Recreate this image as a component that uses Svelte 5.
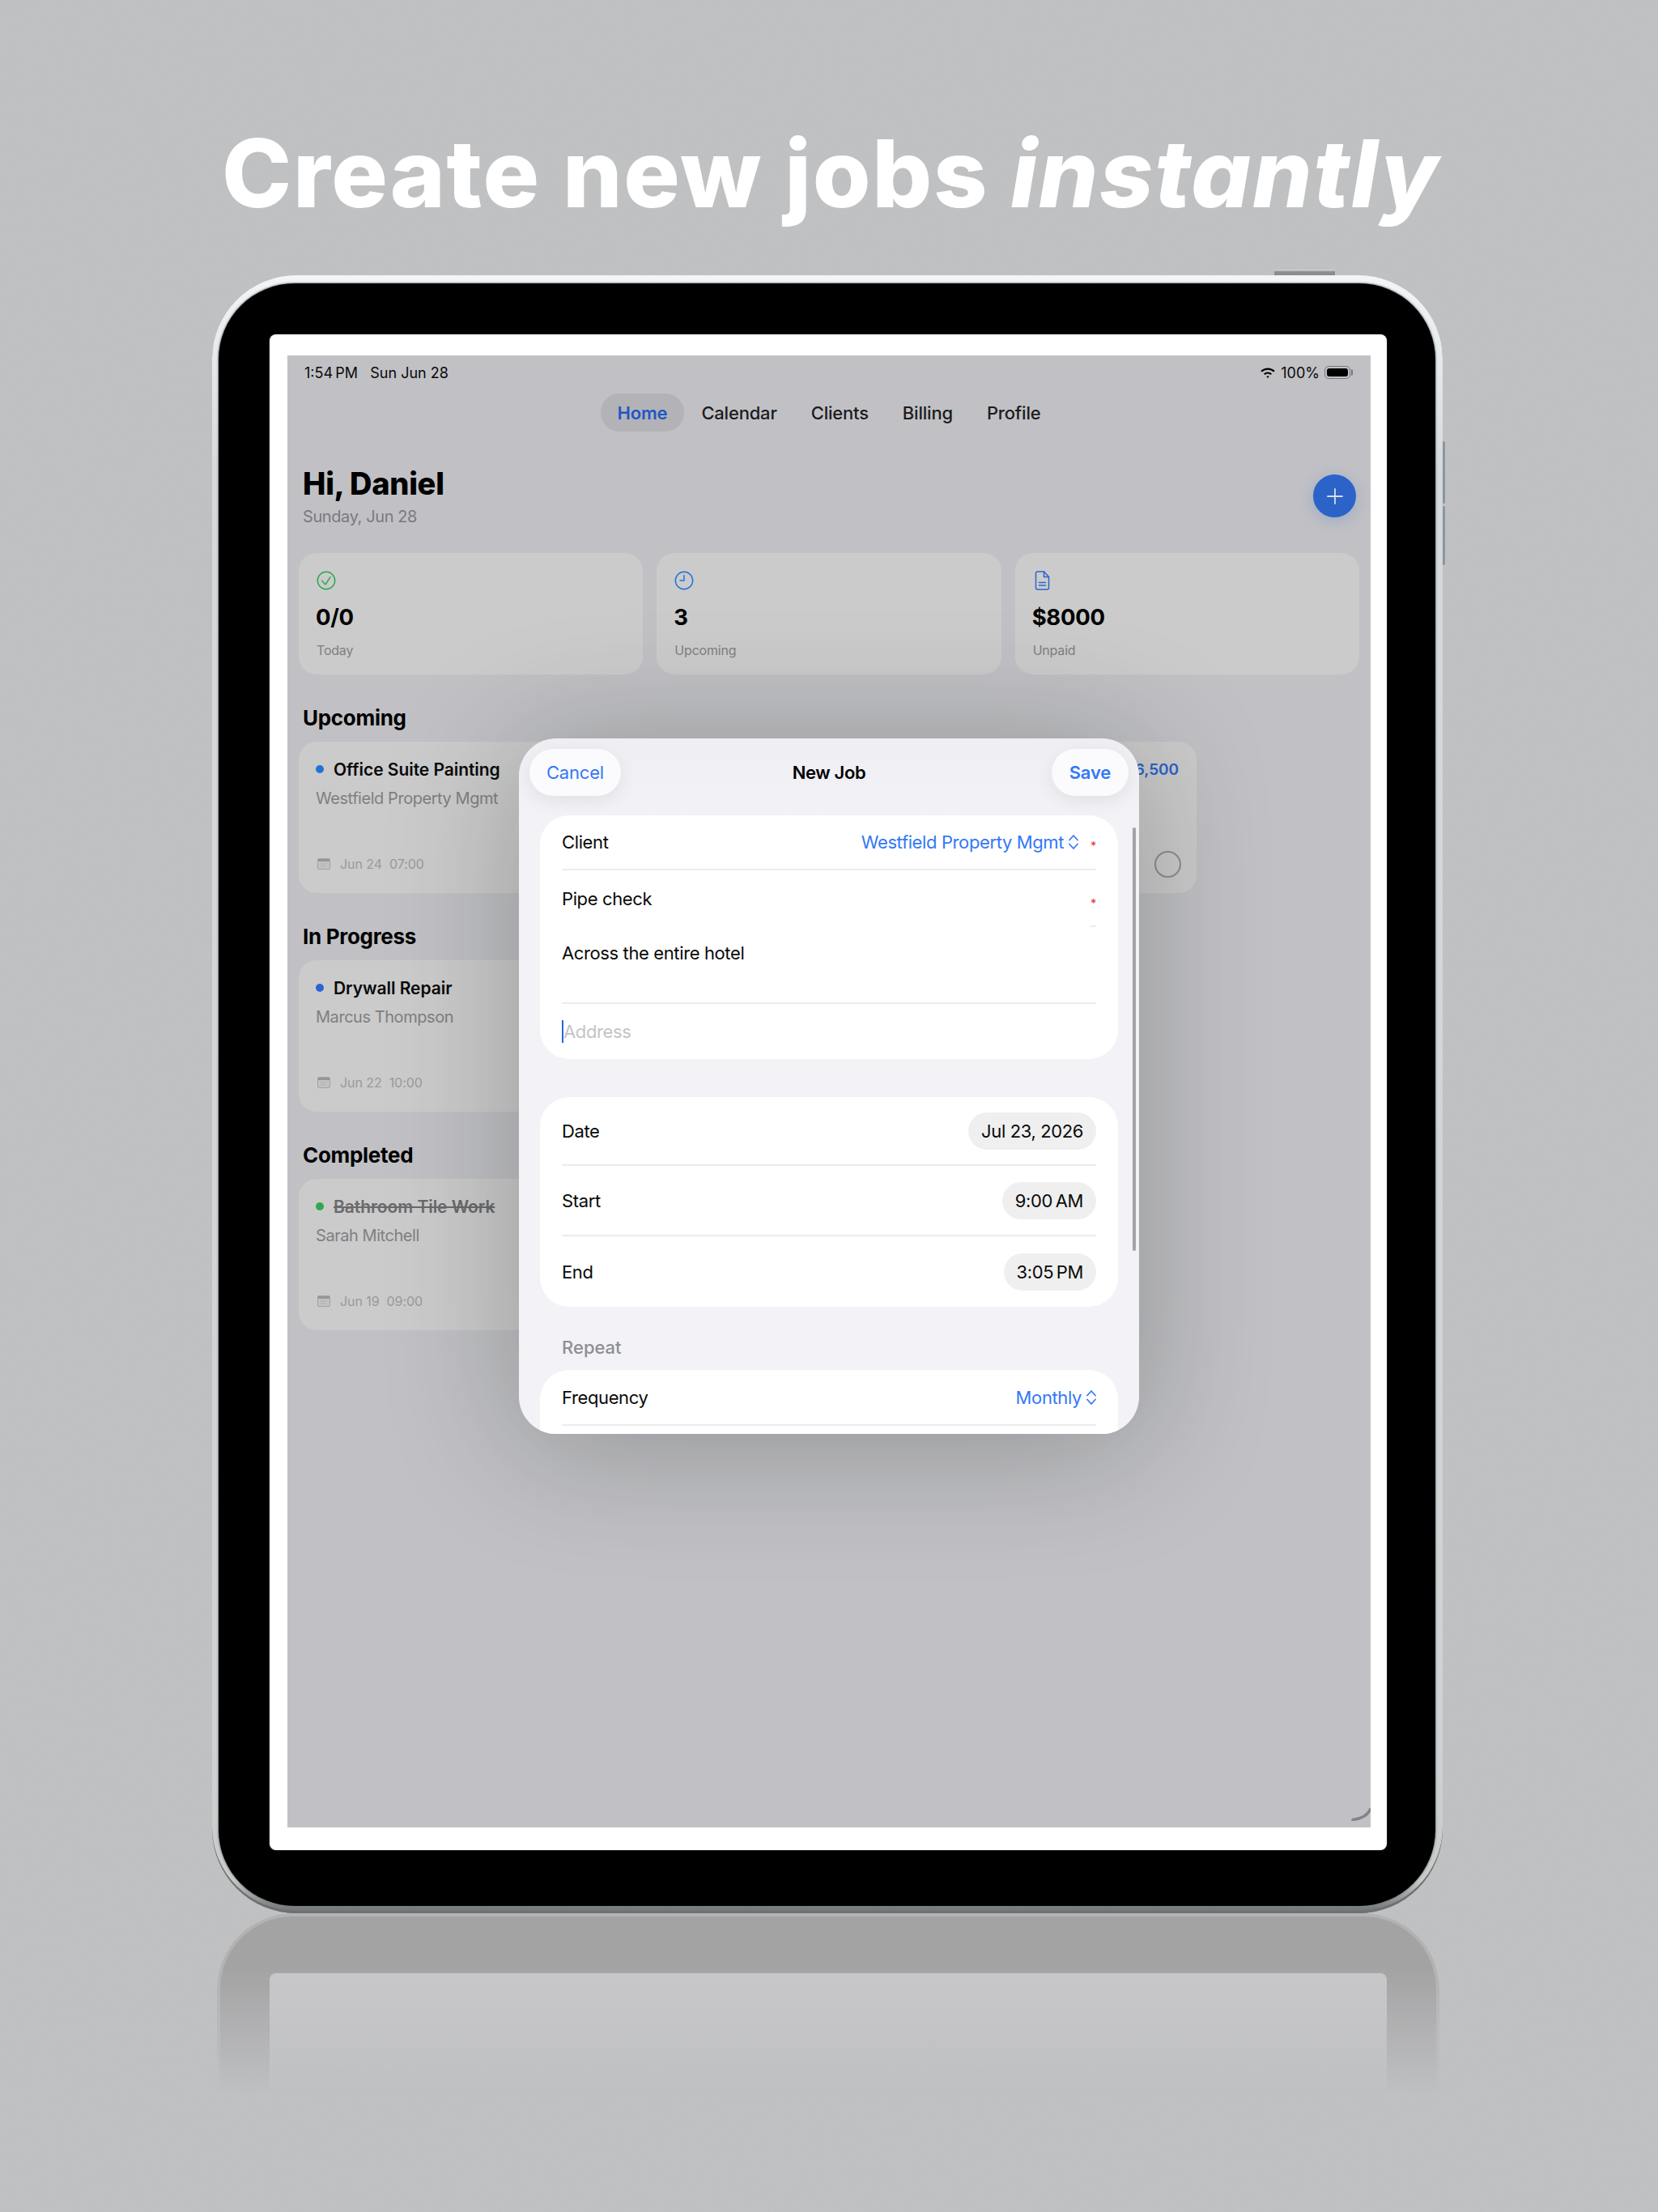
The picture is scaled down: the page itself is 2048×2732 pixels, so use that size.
<script lang="ts">
    const stats = [
        { id: "check", value: "0/0", label: "Today" },
        { id: "clock", value: "3", label: "Upcoming" },
        { id: "doc", value: "$8000", label: "Unpaid" },
    ];
    const tabs = ["Home", "Calendar", "Clients", "Billing", "Profile"];
    const sections = [
        { title: "In Progress", job: "Drywall Repair", client: "Marcus Thompson", date: "Jun 22", time: "10:00", dot: "#2c64d4", done: false },
        { title: "Completed", job: "Bathroom Tile Work", client: "Sarah Mitchell", date: "Jun 19", time: "09:00", dot: "#2ea84f", done: true },
    ];
</script>

{#snippet calendar()}
    <svg class="cal" viewBox="0 0 16 14" width="16" height="14">
        <rect x="0.5" y="0.5" width="15" height="13" rx="1.5" fill="#c2c2c2" stroke="#a2a2a2" />
        <path d="M1 1h14v3H1z" fill="#969696" />
        <path d="M4 7h8M4 10h8" stroke="#a2a2a2" stroke-dasharray="1 1" fill="none" />
    </svg>
{/snippet}

{#snippet updown()}
    <svg viewBox="0 0 12 20" width="12" height="20" fill="none" stroke="#3478f6" stroke-width="1.7" stroke-linecap="round" stroke-linejoin="round">
        <path d="M1 7.5 6 2l5 5.500M1 12.500 6 18l5-5.500" />
    </svg>
{/snippet}

<div class="page">
    <svg class="grain" width="2048" height="2732" aria-hidden="true">
        <filter id="noise"><feTurbulence type="fractalNoise" baseFrequency="0.7" numOctaves="2" /><feColorMatrix type="saturate" values="0" /></filter>
        <rect width="2048" height="2732" filter="url(#noise)" />
    </svg>

    <h1 class="headline">Create new jobs <em>instantly</em></h1>

    <div class="device">
        <span class="btn-top"></span>
        <span class="btn-vol one"></span>
        <span class="btn-vol two"></span>
        <div class="bezel">
            <div class="white">
                <div class="screen">
                    <div class="status">
                        <span>1:54&#8239;PM&nbsp;&nbsp;&nbsp;Sun Jun 28</span>
                        <div class="status-right">
                            <svg viewBox="0 0 20 15" width="20" height="15" fill="#000">
                                <path d="M10 11.200a2 2 0 0 1 1.600.8L10 14l-1.600-2a2 2 0 0 1 1.600-.8Z" />
                                <path d="M10 6.400c2 0 3.800.8 5 2.100l-1.500 1.600A5 5 0 0 0 10 8.600a5 5 0 0 0-3.500 1.500L5 8.500a7 7 0 0 1 5-2.100Z" />
                                <path d="M10 1.500c3.400 0 6.500 1.300 8.700 3.500l-1.500 1.600A10 10 0 0 0 10 3.700a10 10 0 0 0-7.200 2.900L1.300 5A12.500 12.500 0 0 1 10 1.500Z" />
                            </svg>
                            <span>100%</span>
                            <div class="battery"><i></i></div>
                        </div>
                    </div>

                    <nav class="tabs">
                        {#each tabs as tab, i}
                            <span class="tab" class:active={i === 0}>{tab}</span>
                        {/each}
                    </nav>

                    <header class="hello">
                        <div>
                            <h2>Hi, Daniel</h2>
                            <p>Sunday, Jun 28</p>
                        </div>
                        <div class="fab">
                            <svg viewBox="0 0 20 20" width="20" height="20" stroke="#d8dde8" stroke-width="1.8" stroke-linecap="round">
                                <path d="M10 1v18M1 10h18" />
                            </svg>
                        </div>
                    </header>

                    <div class="stats">
                        {#each stats as s}
                            <div class="stat">
                                <div class="stat-icon">
                                    {#if s.id === "check"}
                                        <svg viewBox="0 0 24 24" width="24" height="24" fill="none" stroke="#2ea84f" stroke-width="1.5" stroke-linecap="round" stroke-linejoin="round">
                                            <circle cx="12" cy="12" r="10.7" />
                                            <path d="m6.700 12.300 4.300 4.700 6-9.300" />
                                        </svg>
                                    {:else if s.id === "clock"}
                                        <svg viewBox="0 0 24 24" width="24" height="24" fill="none" stroke="#1f74d6" stroke-width="1.5" stroke-linecap="round" stroke-linejoin="round">
                                            <circle cx="12" cy="12" r="10.7" />
                                            <path d="M12 5.500V12H7" />
                                        </svg>
                                    {:else}
                                        <svg viewBox="0 0 24 24" width="24" height="24" fill="none" stroke="#2c64d0" stroke-width="1.5" stroke-linecap="round" stroke-linejoin="round">
                                            <path d="M5.500 1h8l6 6.500V21a2 2 0 0 1-2 2H5.500a2 2 0 0 1-2-2V3a2 2 0 0 1 2-2Z" />
                                            <path d="M13.500 1v6.500h6M7.500 14.500h8M7.500 18h8" />
                                        </svg>
                                    {/if}
                                </div>
                                <div class="stat-value">{s.value}</div>
                                <div class="stat-label">{s.label}</div>
                            </div>
                        {/each}
                    </div>

                    <section>
                        <h3>Upcoming</h3>
                        <div class="cards">
                            <div class="card">
                                <div class="job"><i style="background:#1f74d6"></i>Office Suite Painting</div>
                                <div class="client">Westfield Property Mgmt</div>
                                <div class="when">{@render calendar()}<span>Jun 24&nbsp;&nbsp;07:00</span></div>
                            </div>
                            <div class="card">
                                <div class="job"><span class="price">$6,500</span></div>
                                <div class="when end"><span class="radio"></span></div>
                            </div>
                        </div>
                    </section>

                    {#each sections as sec}
                        <section>
                            <h3>{sec.title}</h3>
                            <div class="cards">
                                <div class="card">
                                    <div class="job" class:done={sec.done}><i style="background:{sec.dot}"></i><span>{sec.job}</span></div>
                                    <div class="client">{sec.client}</div>
                                    <div class="when">{@render calendar()}<span>{sec.date}&nbsp;&nbsp;{sec.time}</span></div>
                                </div>
                            </div>
                        </section>
                    {/each}

                    <div class="modal">
                        <div class="modal-head">
                            <span class="pill">Cancel</span>
                            <strong>New Job</strong>
                            <span class="pill save">Save</span>
                        </div>

                        <div class="group first">
                            <div class="row client-row">
                                <span>Client</span>
                                <div class="picker">Westfield Property Mgmt {@render updown()}<b>*</b></div>
                            </div>
                            <div class="row title-row">
                                <span>Pipe check</span>
                                <b>*</b>
                                <i class="stub"></i>
                            </div>
                            <div class="row notes-row"><span>Across the entire hotel</span></div>
                            <div class="row address-row"><i class="caret"></i><span>Address</span></div>
                        </div>

                        <div class="group second">
                            <div class="row time-row"><span>Date</span><span class="chip">Jul 23, 2026</span></div>
                            <div class="row time-row"><span>Start</span><span class="chip">9:00&#8239;AM</span></div>
                            <div class="row time-row"><span>End</span><span class="chip">3:05&#8239;PM</span></div>
                        </div>

                        <div class="group-label">Repeat</div>
                        <div class="group third">
                            <div class="row freq-row">
                                <span>Frequency</span>
                                <div class="picker">Monthly {@render updown()}</div>
                            </div>
                        </div>

                        <div class="scrollbar"></div>
                    </div>

                    <svg class="corner" viewBox="0 0 24 16" width="24" height="16" fill="none" stroke="#858587" stroke-width="3.5" stroke-linecap="round">
                        <path d="M2 14.500C11 13.500 20 10 24 1" />
                    </svg>
                </div>
            </div>
        </div>
    </div>

    <div class="reflection">
        <div class="reflection-white"></div>
    </div>
</div>

<style>
    :global(body) {
        margin: 0;
        background: #c0c1c3;
    }

    .page {
        position: relative;
        width: 2048px;
        height: 2732px;
        overflow: hidden;
        background: #c0c1c3;
        font-family: Inter, "Liberation Sans", sans-serif;
        color: #000;
    }

    .grain {
        position: absolute;
        inset: 0;
        opacity: 0.05;
    }

    .headline {
        position: relative;
        margin: 0;
        height: 340px;
        box-sizing: border-box;
        padding: 146px 0 0 274px;
        font-size: 116px;
        line-height: 136px;
        font-weight: 800;
        letter-spacing: 1.7px;
        white-space: nowrap;
        color: #fff;
    }

    .headline em {
        font-style: italic;
    }

    .device {
        position: relative;
        width: 1520px;
        height: 2023px;
        box-sizing: border-box;
        margin-left: 262px;
        padding: 10px 9px 9px 8px;
        border-radius: 104px;
        background: linear-gradient(to bottom, #f3f5f6 0, #d6d9da 12%, #cfd2d2 90%, #c9cbc9 98%, #6e6f70 100%);
        box-shadow: inset 0 -3px 0 #6f7071;
    }

    .btn-top {
        position: absolute;
        top: -7px;
        left: 1312px;
        width: 75px;
        height: 7px;
        border-radius: 2px 2px 0 0;
        background: linear-gradient(to bottom, #dfdfdf 0, #8c8d8f 40%);
    }

    .btn-vol {
        position: absolute;
        right: -3px;
        width: 3px;
        border-radius: 0 2px 2px 0;
        background: #8d969f;
    }

    .btn-vol.one {
        top: 205px;
        height: 77px;
    }

    .btn-vol.two {
        top: 285px;
        height: 73px;
    }

    .bezel {
        height: 100%;
        box-sizing: border-box;
        padding: 63px 60px 69px 63px;
        border-radius: 94px;
        background: #000;
        box-shadow: 0 0 2px 1px rgba(110, 122, 134, 0.8);
    }

    .white {
        height: 100%;
        box-sizing: border-box;
        padding: 26px 20px 28px 22px;
        border-radius: 8px;
        background: #fff;
        box-shadow: 0 0 2px #666;
    }

    .screen {
        position: relative;
        height: 100%;
        overflow: hidden;
        background: #c1c1c5;
    }

    .status {
        display: flex;
        align-items: center;
        justify-content: space-between;
        height: 42px;
        padding: 0 23px 0 21px;
        font-size: 18px;
        font-weight: 400;
        color: #0a0a0a;
    }

    .status-right {
        display: flex;
        align-items: center;
        gap: 6px;
    }

    .battery {
        position: relative;
        box-sizing: border-box;
        width: 32px;
        height: 16px;
        padding: 2px;
        border: 1px solid #77777b;
        border-radius: 5px;
        margin-right: 2px;
    }

    .battery i {
        display: block;
        height: 100%;
        border-radius: 3px;
        background: #000;
    }

    .battery::after {
        content: "";
        position: absolute;
        top: 3px;
        right: -4px;
        width: 2px;
        height: 8px;
        border-radius: 0 2px 2px 0;
        background: #77777b;
    }

    .tabs {
        display: flex;
        justify-content: center;
        margin-top: 5px;
        height: 47px;
    }

    .tab {
        display: flex;
        align-items: center;
        padding: 0 21px;
        border-radius: 23px;
        font-size: 22px;
        font-weight: 500;
        letter-spacing: -0.2px;
        color: #1c1c1e;
    }

    .tab.active {
        background: #b3b3b7;
        color: #2257c4;
        font-weight: 600;
    }

    .hello {
        display: flex;
        align-items: center;
        justify-content: space-between;
        margin-top: 41px;
        padding: 0 18px 0 19px;
    }

    .hello h2 {
        margin: 0;
        font-size: 38px;
        line-height: 46px;
        font-weight: 800;
        letter-spacing: -0.3px;
    }

    .hello p {
        margin: 5px 0 0;
        font-size: 20px;
        line-height: 26px;
        letter-spacing: -0.4px;
        color: #7a7a7e;
    }

    .fab {
        display: flex;
        align-items: center;
        justify-content: center;
        width: 53px;
        height: 53px;
        border-radius: 50%;
        background: #2b63c9;
        box-shadow: 0 4px 18px rgba(43, 99, 201, 0.25);
    }

    .stats {
        display: grid;
        grid-template-columns: repeat(3, 1fr);
        gap: 17px;
        margin-top: 32px;
        padding: 0 14px;
    }

    .stat {
        box-sizing: border-box;
        height: 150px;
        padding: 22px 22px 20px;
        border-radius: 22px;
        background: #cbcbcb;
    }

    .stat-icon {
        display: flex;
        height: 24px;
    }

    .stat-value {
        margin: 16px 0 0 -1px;
        font-size: 27.5px;
        line-height: 34px;
        font-weight: 700;
        letter-spacing: -0.3px;
    }

    .stat-label {
        margin-top: 14px;
        font-size: 16px;
        line-height: 20px;
        letter-spacing: -0.2px;
        color: #7f7f82;
    }

    section {
        margin-top: 38px;
        padding: 0 14px;
    }

    section h3 {
        margin: 0 0 13px 5px;
        font-size: 26px;
        line-height: 32px;
        font-weight: 700;
        letter-spacing: -0.3px;
    }

    .cards {
        display: grid;
        grid-template-columns: 546px 546px;
        gap: 17px;
    }

    .card {
        box-sizing: border-box;
        display: flex;
        flex-direction: column;
        height: 187px;
        padding: 22px 22px 19px;
        border-radius: 22px;
        background: #cbcbcb;
    }

    .job {
        display: flex;
        align-items: center;
        gap: 12px;
        height: 24px;
        font-size: 21px;
        font-weight: 600;
        letter-spacing: -0.05px;
        color: #0a0a0a;
        white-space: nowrap;
    }

    .job i {
        width: 10px;
        height: 10px;
        margin-left: -1px;
        border-radius: 50%;
    }

    .job.done span {
        color: #6a6a6d;
        text-decoration: line-through;
    }

    .price {
        margin-left: auto;
        color: #2b63c9;
        font-size: 19px;
    }

    .client {
        margin: 12px 0 0 -1px;
        font-size: 20px;
        line-height: 24px;
        letter-spacing: -0.45px;
        color: #7f7f82;
    }

    .when {
        display: flex;
        align-items: center;
        gap: 12px;
        margin-top: auto;
        height: 34px;
        font-size: 16px;
        letter-spacing: -0.05px;
        color: #9a9a9a;
    }

    .when.end {
        justify-content: flex-end;
    }

    .radio {
        width: 33px;
        height: 33px;
        box-sizing: border-box;
        margin-right: -3px;
        border: 2px solid #8e8e8e;
        border-radius: 50%;
    }

    .cal {
        margin-left: 1px;
    }

    .modal {
        position: absolute;
        top: 473px;
        left: 286px;
        width: 766px;
        height: 859px;
        box-sizing: border-box;
        overflow: hidden;
        padding: 13px 13px 0;
        border-radius: 46px;
        background: linear-gradient(to bottom, #eeeef3 0, #f2f2f7 110px);
        box-shadow: 0 12px 160px rgba(10, 20, 10, 0.27);
        font-size: 22px;
        letter-spacing: -0.38px;
    }

    .modal-head {
        display: grid;
        grid-template-columns: 1fr auto 1fr;
        align-items: center;
        height: 58px;
        font-weight: 600;
    }

    .modal-head strong {
        font-weight: 600;
        font-size: 22px;
    }

    .pill {
        display: flex;
        align-items: center;
        justify-self: start;
        height: 58px;
        padding: 0 21px;
        border-radius: 29px;
        background: #fbfbfe;
        color: #3478f6;
        font-weight: 400;
        letter-spacing: -0.2px;
        box-shadow: 0 6px 22px rgba(0, 0, 0, 0.07);
    }

    .pill.save {
        justify-self: end;
        padding: 0 22px;
        font-weight: 600;
    }

    .group {
        position: relative;
        margin: 0 13px;
        padding: 0 27px;
        border-radius: 36px;
        background: #fff;
        color: #0a0a0a;
    }

    .group.first {
        margin-top: 24px;
        height: 301px;
    }

    .group.second {
        margin-top: 47px;
        height: 259px;
    }

    .group.third {
        margin-top: 16px;
        height: 120px;
    }

    .group-label {
        margin: 38px 0 0 40px;
        height: 24px;
        line-height: 24px;
        font-weight: 500;
        letter-spacing: 0;
        color: #8e8e93;
    }

    .row {
        position: relative;
        display: flex;
        align-items: center;
        justify-content: space-between;
        box-sizing: border-box;
    }

    .row b {
        color: #f0364a;
        font-size: 14px;
        line-height: 14px;
        font-weight: 500;
    }

    .client-row {
        height: 68px;
        border-bottom: 2px solid #ececee;
    }

    .picker {
        display: flex;
        align-items: center;
        gap: 6px;
        color: #3478f6;
    }

    .picker b {
        margin: 10px 0 0 9px;
    }

    .title-row {
        height: 70px;
    }

    .title-row b {
        margin-top: 12px;
    }

    .stub {
        position: absolute;
        right: 0;
        bottom: 0;
        width: 8px;
        height: 2px;
        background: #ececee;
    }

    .notes-row {
        align-items: flex-start;
        height: 95px;
        padding-top: 19px;
        border-bottom: 2px solid #ececee;
    }

    .address-row {
        justify-content: flex-start;
        height: 68px;
        color: #c4c4c8;
    }

    .caret {
        width: 2px;
        height: 28px;
        background: #2b63e8;
    }

    .time-row {
        height: 87px;
        border-bottom: 2px solid #ececee;
    }

    .time-row:first-child {
        height: 85px;
    }

    .time-row:last-child {
        border-bottom: none;
    }

    .chip {
        height: 46px;
        line-height: 46px;
        padding: 0 16px;
        border-radius: 23px;
        background: #efefef;
    }

    .freq-row {
        height: 69px;
        border-bottom: 2px solid #ececee;
    }

    .scrollbar {
        position: absolute;
        top: 110px;
        right: 4px;
        width: 4px;
        height: 523px;
        border-radius: 2px;
        background: #a3a3a8;
    }

    .corner {
        position: absolute;
        right: 0;
        bottom: 8px;
    }

    .reflection {
        position: relative;
        box-sizing: border-box;
        width: 1510px;
        height: 225px;
        margin: 0 0 0 268px;
        padding: 70px 61px 0;
        border: 4px solid #b3b3b4;
        border-bottom: none;
        border-radius: 94px 94px 0 0;
        background: #a3a3a4;
        -webkit-mask-image: linear-gradient(to bottom, #000 0, #000 30%, transparent 100%);
        mask-image: linear-gradient(to bottom, #000 0, #000 30%, transparent 100%);
    }

    .reflection-white {
        height: 100%;
        border-radius: 8px 8px 0 0;
        background: #c7c7c9;
    }
</style>
